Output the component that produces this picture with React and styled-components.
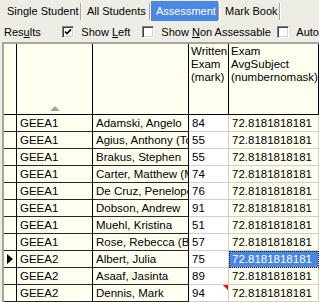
import React from 'react';
import styled, { createGlobalStyle } from 'styled-components';

const GlobalStyle = createGlobalStyle`
  html, body {
    margin: 0;
    padding: 0;
  }
  body {
    background: #eeede5;
    font-family: "Liberation Sans", Arial, sans-serif;
    font-size: 11px;
    color: #000;
    overflow: hidden;
  }
`;

const Page = styled.div`
  width: 319px;
  height: 302px;
  overflow: hidden;
`;

/* ---------- tabs ---------- */

const TabBar = styled.div`
  display: flex;
  height: 22px;
  padding-left: 2px;
`;

const Tab = styled.div`
  box-sizing: border-box;
  width: ${(p) => p.width}px;
  height: 20px;
  margin-top: 1px;
  padding-left: 5px;
  display: flex;
  align-items: center;
  white-space: nowrap;
  background: ${(p) => (p.active ? '#4a87e2' : 'transparent')};
  color: ${(p) => (p.active ? '#fff' : '#000')};
`;

const TabSep = styled.div`
  width: 1px;
  margin: 3px 0 2px;
  background: #a7a597;
  border-right: 1px solid #fff;
`;

/* ---------- options ---------- */

const OptionsBar = styled.div`
  display: flex;
  align-items: center;
  height: 20px;
  padding-left: 4px;
  white-space: nowrap;
`;

const BarLabel = styled.span`
  width: 59px;
`;

const Option = styled.label`
  display: flex;
  align-items: center;
  gap: 7px;
  width: ${(p) => (p.width ? `${p.width}px` : 'auto')};
  flex-shrink: 0;
`;

const Box = styled.span`
  box-sizing: border-box;
  width: 12px;
  height: 12px;
  background: #fff;
  border-top: 1px solid #808080;
  border-left: 1px solid #808080;
  border-right: 1px solid #fff;
  border-bottom: 1px solid #fff;
  box-shadow: inset 1px 1px 0 #404040, inset -1px -1px 0 #d4d0c8;
  display: flex;
  align-items: center;
  justify-content: center;
`;

const CheckBox = ({ checked }) => (
  <Box>
    {checked && (
      <svg width="8" height="8" viewBox="0 0 8 8">
        <polyline points="1,3.5 3,5.6 7,1.4" fill="none" stroke="#000" strokeWidth="1.6" />
      </svg>
    )}
  </Box>
);

/* ---------- grid ---------- */

const Grid = styled.div`
  margin-left: 2px;
  width: max-content;
  border-top: 2px solid #a6a69e;
  border-left: 2px solid #a6a69e;
  font-size: 11.5px;
`;

const HeaderRow = styled.div`
  display: flex;
  height: 71px;
`;

const HeaderCell = styled.div`
  box-sizing: border-box;
  width: ${(p) => p.width}px;
  display: flex;
  flex-direction: column;
  padding: 1px 0 3px 2px;
  line-height: 13px;
  background: #fffff0;
  border-right: 1px solid #000;
  border-bottom: 1px solid #000;
  white-space: nowrap;
  overflow: hidden;
`;

const SortMark = styled.span`
  margin-top: auto;
  align-self: center;
  margin-right: 2px;
  width: 0;
  height: 0;
  border-left: 5px solid transparent;
  border-right: 5px solid transparent;
  border-bottom: 5px solid #a4a4a4;
`;

const Row = styled.div`
  display: flex;
  height: 17px;
`;

const lineColors = {
  fixed: { right: '#000', bottom: '#262626', bg: '#fffff0' },
  edit: { right: '#d0d0c8', bottom: '#d0d0c8', bg: '#ffffff' },
  calc: { right: '#d0d0c8', bottom: '#d0d0c8', bg: '#fffff0' },
};

const Cell = styled.div`
  position: relative;
  box-sizing: border-box;
  width: ${(p) => p.width}px;
  padding-left: 3px;
  line-height: 16px;
  white-space: nowrap;
  overflow: hidden;
  background: ${(p) => (p.selected ? '#4a87e2' : lineColors[p.kind].bg)};
  color: ${(p) => (p.selected ? '#fff' : '#000')};
  border-right: 1px solid ${(p) => (p.edge ? '#000' : lineColors[p.kind].right)};
  border-bottom: 1px solid ${(p) => lineColors[p.kind].bottom};
  outline: ${(p) => (p.selected ? '1px dotted #1a1a1a' : 'none')};
  outline-offset: -1px;
`;

const IndicatorCell = styled(Cell)`
  display: flex;
  align-items: center;
`;

const Pointer = styled.span`
  width: 0;
  height: 0;
  border-top: 5px solid transparent;
  border-bottom: 5px solid transparent;
  border-left: 6px solid #000;
`;

const NoteMark = styled.span`
  position: absolute;
  top: 0;
  right: 0;
  width: 0;
  height: 0;
  border-top: 5px solid #f00;
  border-left: 5px solid transparent;
`;

const COLS = [13, 76, 96, 40, 90];

const TABS = [
  { label: 'Single Student', width: 78 },
  { label: 'All Students', width: 67 },
  { label: 'Assessment', width: 67, active: true },
  { label: 'Mark Book', width: 59 },
];

const ROWS = [
  ['GEEA1', 'Adamski, Angelo', '84'],
  ['GEEA1', 'Agius, Anthony (Tony)', '55'],
  ['GEEA1', 'Brakus, Stephen', '55'],
  ['GEEA1', 'Carter, Matthew (Matt)', '74'],
  ['GEEA1', 'De Cruz, Penelope', '76'],
  ['GEEA1', 'Dobson, Andrew', '91'],
  ['GEEA1', 'Muehl, Kristina', '51'],
  ['GEEA1', 'Rose, Rebecca (Becky)', '57'],
  ['GEEA2', 'Albert, Julia', '75'],
  ['GEEA2', 'Asaaf, Jasinta', '89'],
  ['GEEA2', 'Dennis, Mark', '94'],
];

const CURRENT = 8;
const NOTED = 10;

export default function App() {
  return (
    <Page>
      <GlobalStyle />
      <TabBar>
        {TABS.map((t) => (
          <React.Fragment key={t.label}>
            <Tab width={t.width} active={t.active}>{t.label}</Tab>
            <TabSep />
          </React.Fragment>
        ))}
      </TabBar>

      <OptionsBar>
        <BarLabel>Res<u>u</u>lts</BarLabel>
        <Option width={80}>
          <CheckBox checked />
          <span>Show <u>L</u>eft</span>
        </Option>
        <Option width={135}>
          <CheckBox />
          <span>Show <u>N</u>on Assessable</span>
        </Option>
        <Option>
          <CheckBox />
          <span>Auto</span>
        </Option>
      </OptionsBar>

      <Grid>
        <HeaderRow>
          <HeaderCell width={COLS[0]} />
          <HeaderCell width={COLS[1]}>
            <SortMark />
          </HeaderCell>
          <HeaderCell width={COLS[2]} />
          <HeaderCell width={COLS[3]}>
            <span>Written</span>
            <span>Exam</span>
            <span>(mark)</span>
          </HeaderCell>
          <HeaderCell width={COLS[4]}>
            <span>Exam</span>
            <span>AvgSubject</span>
            <span>(numbernomask)</span>
          </HeaderCell>
        </HeaderRow>

        {ROWS.map(([cls, name, mark], i) => (
          <Row key={name}>
            <IndicatorCell width={COLS[0]} kind="fixed">
              {i === CURRENT && <Pointer />}
            </IndicatorCell>
            <Cell width={COLS[1]} kind="fixed">{cls}</Cell>
            <Cell width={COLS[2]} kind="fixed">{name}</Cell>
            <Cell width={COLS[3]} kind="edit">
              {mark}
              {i === NOTED && <NoteMark />}
            </Cell>
            <Cell width={COLS[4]} kind="calc" selected={i === CURRENT}>
              72.8181818181
            </Cell>
          </Row>
        ))}
      </Grid>
    </Page>
  );
}
